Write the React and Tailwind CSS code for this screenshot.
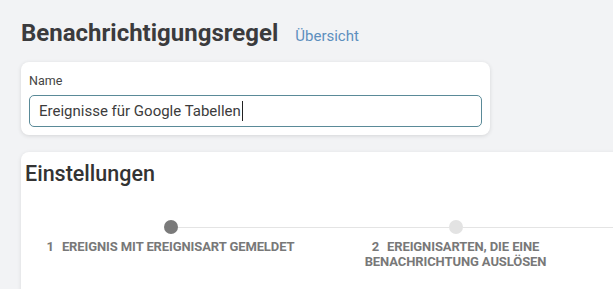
import React from "react";

function Step({ n, lines, active, first }) {
  return (
    <div className="relative flex w-[285px] shrink-0 flex-col items-center">
      {!first && (
        <div className="absolute top-[7px] left-[calc(-50%+7px)] right-[calc(50%+7px)] h-px bg-[#e4e4e4]" />
      )}
      <div
        className={`h-[14px] w-[14px] rounded-full ${active ? "bg-[#7a7a7a]" : "bg-[#e3e3e3]"}`}
      />
      {lines && (
        <div className="mt-[5px] text-center text-[13px] leading-[15px] font-bold uppercase text-[#787878] tracking-[-0.1px]">
          {lines.map((l, i) => (
            <div key={i}>
              {i === 0 && <span className="mr-[8px]">{n}</span>}
              {l}
            </div>
          ))}
        </div>
      )}
    </div>
  );
}

export default function App() {
  return (
    <div
      className="h-[289px] w-[613px] overflow-hidden bg-[#f2f3f5] pl-[21px]"
      style={{ fontFamily: "Roboto, 'Noto Sans', sans-serif" }}
    >
      <div className="flex items-baseline pt-[18px]">
        <h1 className="text-[24px] leading-[30px] font-bold text-[#3b3b3d]">
          Benachrichtigungsregel
        </h1>
        <span className="ml-[17px] text-[15px] text-[#5d8fbe]">Übersicht</span>
      </div>

      <div className="mt-[14px] w-[469px] rounded-[8px] bg-white px-[8px] pt-[11px] pb-[8px] shadow-[0_1px_4px_rgba(0,0,0,0.12)]">
        <div className="text-[12.5px] leading-[16px] text-[#444]">Name</div>
        <div className="mt-[6px] flex h-[32px] items-center rounded-[5px] border border-[#5a8a98] px-[9px] text-[15px] text-[#3c3c3c]">
          Ereignisse für Google Tabellen
          <span className="ml-px inline-block h-[20px] w-px bg-[#222]" />
        </div>
      </div>

      <div className="mt-[17px] w-[900px] rounded-[8px] bg-white pt-[8px] pb-[40px] shadow-[0_1px_4px_rgba(0,0,0,0.10)]">
        <h2 className="pl-[4px] text-[21.5px] leading-[28px] font-medium text-[#333]">
          Einstellungen
        </h2>
        <div className="mt-[32px] ml-[7px] flex">
          <Step n="1" lines={["Ereignis mit Ereignisart gemeldet"]} active first />
          <Step n="2" lines={["Ereignisarten, die eine", "Benachrichtung auslösen"]} />
          <Step n="3" />
        </div>
      </div>
    </div>
  );
}
